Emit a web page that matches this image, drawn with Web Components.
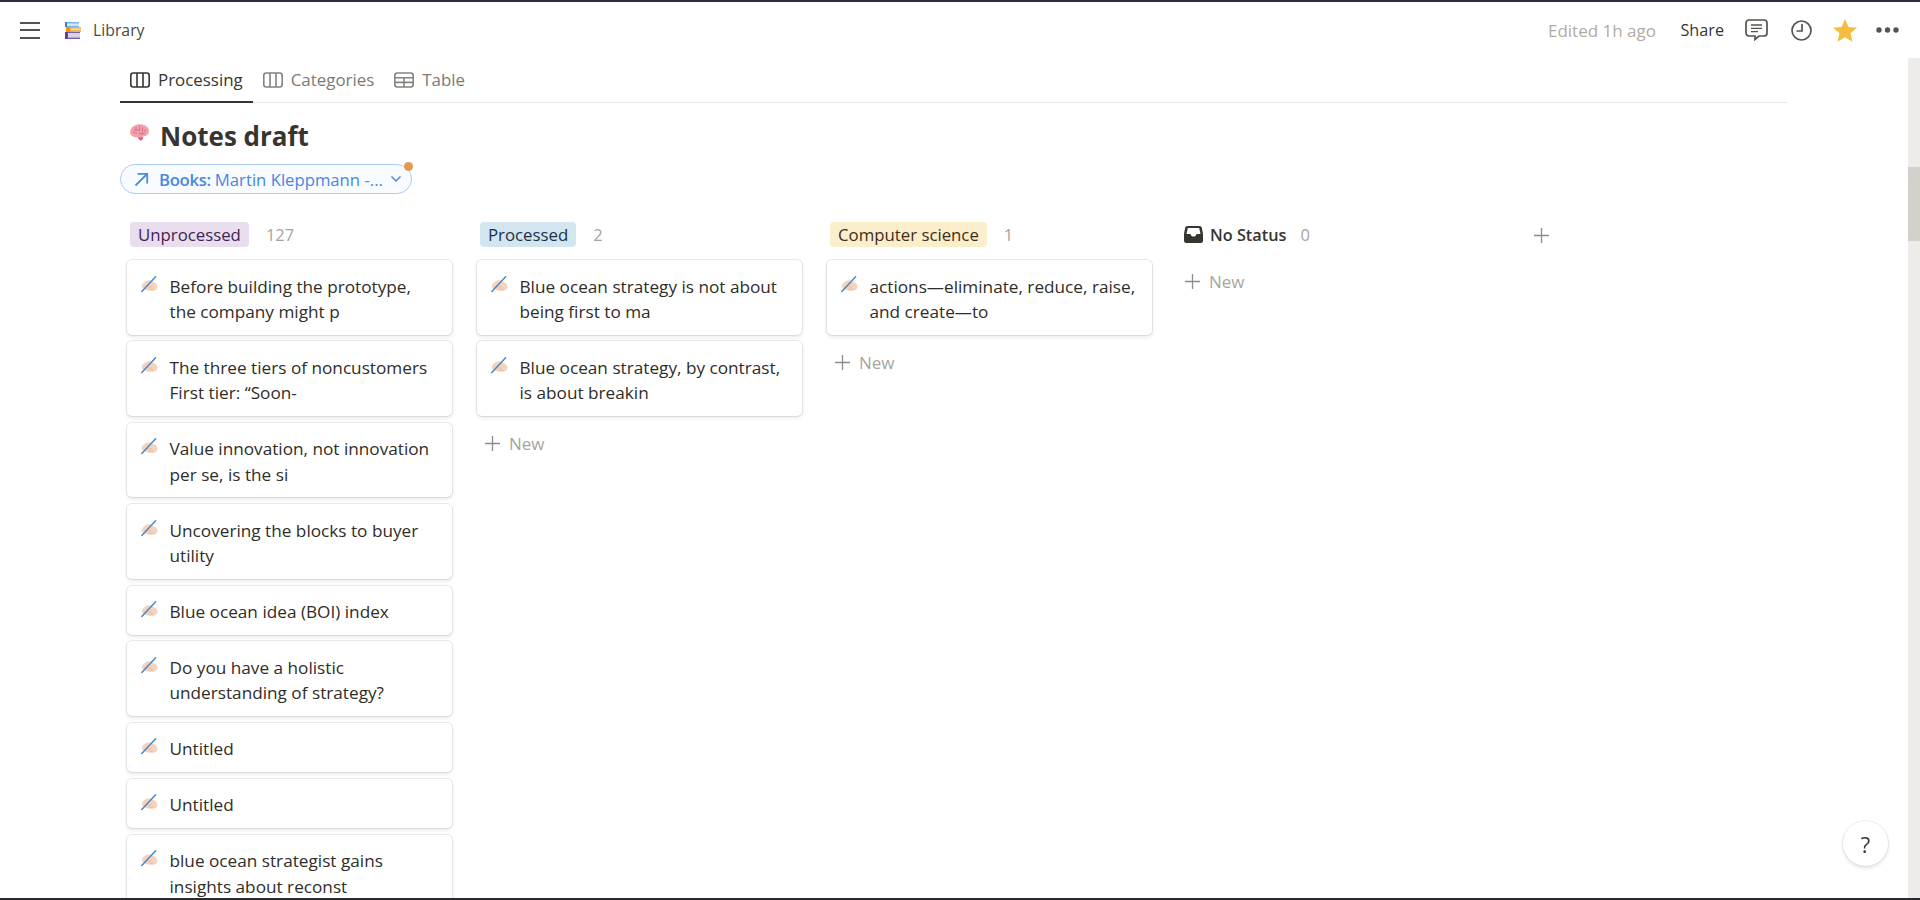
<!DOCTYPE html>
<html lang="en"><head><meta charset="utf-8"><title>Notes draft</title>
<style>
html,body{margin:0;height:100%;overflow:hidden;background:#fff}
body{font-family:"Open Sans","Noto Sans",sans-serif;font-size:17px;color:#37352f}
</style></head><body>
<app-shell>
  <app-topbar slot="top"></app-topbar>
  <view-tabs></view-tabs>
  <page-title>Notes draft</page-title>
  <filter-pill></filter-pill>
  <kanban-board>
    <board-column tag="Unprocessed" count="127" bg="#e8deee" fg="#412454">
      <note-card>Before building the prototype,<br>the company might p</note-card>
      <note-card>The three tiers of noncustomers<br>First tier: “Soon-</note-card>
      <note-card>Value innovation, not innovation<br>per se, is the si</note-card>
      <note-card>Uncovering the blocks to buyer<br>utility</note-card>
      <note-card>Blue ocean idea (BOI) index</note-card>
      <note-card>Do you have a holistic<br>understanding of strategy?</note-card>
      <note-card>Untitled</note-card>
      <note-card>Untitled</note-card>
      <note-card>blue ocean strategist gains<br>insights about reconst</note-card>
    </board-column>
    <board-column tag="Processed" count="2" bg="#d3e5ef" fg="#183347" new>
      <note-card>Blue ocean strategy is not about<br>being first to ma</note-card>
      <note-card>Blue ocean strategy, by contrast,<br>is about breakin</note-card>
    </board-column>
    <board-column tag="Computer science" count="1" bg="#fbeecb" fg="#402c1b" new>
      <note-card>actions—eliminate, reduce, raise,<br>and create—to</note-card>
    </board-column>
    <board-column nostatus tag="No Status" count="0" new></board-column>
    <add-group></add-group>
  </kanban-board>
</app-shell>
<help-button></help-button>
<script>
function def(name, css, html){
  customElements.define(name, class extends HTMLElement{
    connectedCallback(){
      if(this.shadowRoot) return;
      const r=this.attachShadow({mode:'open'});
      r.innerHTML='<style>'+css+'</style>'+(typeof html==='function'?html(this):html);
    }
  });
}
const PLUS=(c='#8f8d88')=>`<svg width="15" height="15" viewBox="0 0 15 15"><path d="M7.5 0v15M0 7.5h15" stroke="${c}" stroke-width="1.3" fill="none"/></svg>`;
const BOARD=c=>`<svg width="20" height="16" viewBox="0 0 20 16" fill="none" stroke="${c}" stroke-width="1.6"><rect x=".8" y="1" width="18.4" height="14" rx="2.4"/><path d="M7 1v14M13 1v14"/></svg>`;
const TABLE=c=>`<svg width="20" height="16" viewBox="0 0 20 16" fill="none" stroke="${c}" stroke-width="1.6"><rect x=".8" y="1" width="18.4" height="14" rx="2.4"/><path d="M1 5.8h18M1 10.4h18M10 5.8V15"/></svg>`;
const BOOKS=`<svg width="16" height="17" viewBox="0 0 16 17"><rect x="0" y="0" width="14" height="5" fill="#7cb4ea"/><rect x="0" y="0" width="2" height="5" fill="#3d7fc4"/><rect x="2" y="1.5" width="12" height="2.4" fill="#dfe7ee"/><rect x="1" y="5" width="15" height="5" fill="#f0b24e"/><rect x="1" y="5" width="4.5" height="5" fill="#f29300"/><rect x="5.5" y="6.5" width="10.5" height="1.6" fill="#eadcc4"/><rect x="0" y="10" width="15" height="7" fill="#7e5cb5"/><rect x="3" y="11" width="12" height="4.6" fill="#d7d8de"/><rect x="0" y="10" width="2.6" height="7" fill="#5c3f99"/></svg>`;
const BRAIN=`<svg width="20" height="18" viewBox="0 0 20 18"><path d="M5 1.6C7 .1 11 -.2 13.4.9c2.6.4 4.8 2.4 5.3 4.8.7 2.5-.3 4.7-2.3 5.9-1.3.8-2.7 1-3.8 1.1.2 1.5-.5 3.3-1.9 3.5-1.3.2-2.3-1.4-3-2.7-1.8-.1-4-.2-5.5-1.4C.4 11 -.3 8.8.4 6.6 1 4.2 2.9 2.2 5 1.6z" fill="#f0a0ac"/><path d="M6 3v4M4 6h5M9.5 2v5M12.5 3.5v5M9 9.5h6M15.5 5l-1 3M5 10l2-1.5M3 8.5h2M11 11.5v-2" stroke="#d9677b" stroke-width=".8" fill="none"/><path d="M8 13.3c1.5.5 3.5.4 5-.4.1 1.5-.5 3.3-1.9 3.5-1.3.2-2.3-1.7-3.1-3.1z" fill="#e35d75"/></svg>`;
const HAND=`<svg width="17" height="17" viewBox="0 0 17 17"><path d="M.6 10c1-2.6 3.400-4.500 5.700-5.400 1.400-.6 2.900-.5 3.900.2 1.500 1 3.500 1.500 5 2.800 1.300 1.300 1.700 3.700.7 5.200-1 1.500-3.300 2.200-5.700 2-2.500-.1-4.800-.4-6.500-1.600C2.300 13.300 1.200 11.600.6 10z" fill="#f4d4bc"/><path d="M6 10.500c1.800.5 3.500.6 5.200.4M7.500 13c1.500.4 3.200.4 5 0" stroke="#e3bba0" stroke-width=".8" fill="none"/><path d="M.8 15.400 14.600.8" stroke="#4a87cf" stroke-width="1.500" stroke-linecap="round"/></svg>`;

def('app-shell',`
:host{display:grid;grid-template-columns:1fr 12px;grid-template-rows:56px 1fr;box-sizing:border-box;height:900px;border-top:2px solid #2d2f40;border-bottom:2px solid #2a2a2e;overflow:hidden}
.top{grid-column:1/3}
main{padding:0 120px;min-width:0;overflow:hidden}
.track{background:#edece9;padding-top:109px}
.thumb{height:74px;background:#d3d1cb}
`,`<div class="top"><slot name="top"></slot></div><main><slot></slot></main><div class="track"><div class="thumb"></div></div>`);

def('app-topbar',`
:host{display:flex;align-items:center;height:56px;padding:0 21px 0 20px;box-sizing:border-box;color:#37352f}
.menu{width:20px;height:17px;display:flex;flex-direction:column;justify-content:space-between;margin-right:25px}
.menu i{height:2px;background:#55534e;display:block}
.books{margin-right:12px;display:flex}
.crumb{font-size:15.8px;color:#4b4943}
.sp{flex:1}
.edited{color:#b0aca6;margin-right:24.5px;font-size:17px}
.share{color:#37352f;margin-right:21px;font-size:16.2px}
svg{display:block}
.i1{margin-right:23px}.i2{margin-right:21px}.i3{margin-right:19px}
`,`<span class="menu"><i></i><i></i><i></i></span><span class="books">${BOOKS}</span><span class="crumb">Library</span><span class="sp"></span>
<span class="edited">Edited 1h ago</span><span class="share">Share</span>
<svg class="i1" width="23" height="22" viewBox="0 0 23 22" fill="none" stroke="#55534e" stroke-width="1.7"><path d="M4 1h15a3 3 0 0 1 3 3v10a3 3 0 0 1-3 3h-5l-4 3.500V17H4a3 3 0 0 1-3-3V4a3 3 0 0 1 3-3z"/><path d="M6 6h11M6 9.300h11M6 12.600h7" stroke-width="1.3"/></svg>
<svg class="i2" width="21" height="21" viewBox="0 0 21 21" fill="none" stroke="#55534e" stroke-width="1.7"><circle cx="10.500" cy="10.500" r="9.500"/><path d="M11 4v7H5.500"/></svg>
<svg class="i3" width="24" height="23" viewBox="0 0 24 23"><path d="M12 0l3.500 8 8.500.7-6.500 5.600 2 8.500L12 18.200 4.500 22.800l2-8.500L0 8.700 8.500 8z" fill="#f4bd3f"/></svg>
<svg width="23" height="6" viewBox="0 0 23 6" fill="#55534e"><circle cx="3" cy="3" r="2.700"/><circle cx="11.500" cy="3" r="2.700"/><circle cx="20" cy="3" r="2.700"/></svg>`);

def('view-tabs',`
:host{display:flex;height:45px;border-bottom:1px solid #e9e9e7;box-sizing:border-box;font-size:16.9px}
.t{display:flex;align-items:center;gap:8px;padding:0 10px;color:#7c7a75;margin-bottom:-1px;box-sizing:border-box;height:45px}
.t.a{color:#37352f;border-bottom:2px solid #37352f}
.t:not(.a){padding-bottom:2px}
`,`<div class="t a">${BOARD('#37352f')}<span>Processing</span></div><div class="t">${BOARD('#85837e')}<span>Categories</span></div><div class="t">${TABLE('#85837e')}<span>Table</span></div>`);

def('page-title',`
:host{display:flex;align-items:center;box-sizing:border-box;height:61px;padding:4px 0 0 10px;gap:10px;font-size:26px;font-weight:700;color:#37352f}
svg{margin-top:-6px}
`,`${BRAIN}<span><slot></slot></span>`);

def('filter-pill',`
:host{display:block;height:30px}
.p{display:inline-flex;align-items:center;position:relative;height:30px;box-sizing:border-box;width:292px;padding:0 9px 0 13px;border:1px solid #a9cdf5;border-radius:15px;background:#f8fbff;color:#4a86e0;font-size:16.7px}
svg{flex:none}
b{font-weight:600;margin-left:10px;letter-spacing:-.3px}
.n{margin-left:4px;white-space:nowrap;flex:1;overflow:hidden}
.dot{position:absolute;right:-2px;top:-3px;width:9px;height:9px;border-radius:50%;background:#e09a56}
`,`<div class="p"><svg width="15" height="15" viewBox="0 0 15 15" fill="none" stroke="#4a8fe6" stroke-width="1.8"><path d="M1.500 13.500 13 2M3.500 1.800H13.200V11.500"/></svg><b>Books:</b><span class="n">Martin Kleppmann -...</span><svg width="12" height="8" viewBox="0 0 12 8" fill="none" stroke="#4a86e0" stroke-width="1.5"><path d="M1.500 1.500 6 6l4.500-4.500"/></svg><span class="dot"></span></div>`);

def('kanban-board',`
:host{display:flex;gap:25px;padding:28px 0 0 7px;align-items:flex-start}
`,`<slot></slot>`);

def('board-column',`
:host{display:flex;flex-direction:column;width:325px;flex:none}
.h{display:flex;align-items:center;height:25px;margin:0 0 13px 3px;}
.tag{padding:0 8px;height:25px;line-height:25px;border-radius:4px;font-size:16.8px}
.c{color:#a8a49d;margin-left:17px;font-size:16.5px}
.ns{display:flex;align-items:center;gap:7px;font-weight:600;color:#37352f;margin-left:4px;font-size:16.3px}
.ns svg{display:block}
.list{display:flex;flex-direction:column;gap:6.9px}
.new{display:flex;align-items:center;gap:9px;color:#a8a49d;height:30px;padding-left:8px;margin-top:12.5px}
.nsnew{margin-top:6.5px;padding-left:8px}
`,el=>{
  const ns=el.hasAttribute('nostatus');
  const head=ns?`<span class="ns"><svg width="19" height="17" viewBox="0 0 19 17"><path fill-rule="evenodd" d="M3.500 0h12a2.500 2.500 0 0 1 2.400 1.900L19 8v6.500a2.500 2.500 0 0 1-2.500 2.500h-14A2.500 2.500 0 0 1 0 14.500V8l1.100-6.100A2.500 2.500 0 0 1 3.500 0zM3.800 2 2.500 8h4c.3 1.600 1.500 2.600 3 2.600s2.700-1 3-2.600h4L15.200 2z" fill="#37352f"/></svg>${el.getAttribute('tag')}</span>`
  :`<span class="tag" style="background:${el.getAttribute('bg')};color:${el.getAttribute('fg')}">${el.getAttribute('tag')}</span>`;
  return `<div class="h">${head}<span class="c"${ns?' style="margin-left:14px"':''}>${el.getAttribute('count')}</span></div><div class="list"><slot></slot></div>${el.hasAttribute('new')?`<div class="new${ns?' nsnew':''}">${PLUS()}<span>New</span></div>`:''}`;
});

def('note-card',`
:host{display:flex;gap:11.5px;box-sizing:border-box;padding:13.5px 10px 10px 14px;background:#fff;border-radius:5px;box-shadow:0 0 0 1px rgba(15,15,15,.08),0 2px 4px rgba(15,15,15,.1);line-height:25.5px;font-size:17.2px;color:#2f2d28}
svg{flex:none;margin-top:2px}
`,`${HAND}<div><slot></slot></div>`);

def('add-group',`
:host{display:block;margin:6px 0 0 7px;flex:none;height:15px}
svg{display:block}
`,PLUS());

def('help-button',`
:host{position:fixed;right:32px;bottom:34px;width:45px;height:45px;box-sizing:border-box;border-radius:50%;background:#fff;box-shadow:0 0 0 1px rgba(15,15,15,.06),0 2px 4px rgba(15,15,15,.12);display:flex;align-items:center;justify-content:center;font-size:22px;color:#37352f}
`,`?`);
</script>
</body></html>
